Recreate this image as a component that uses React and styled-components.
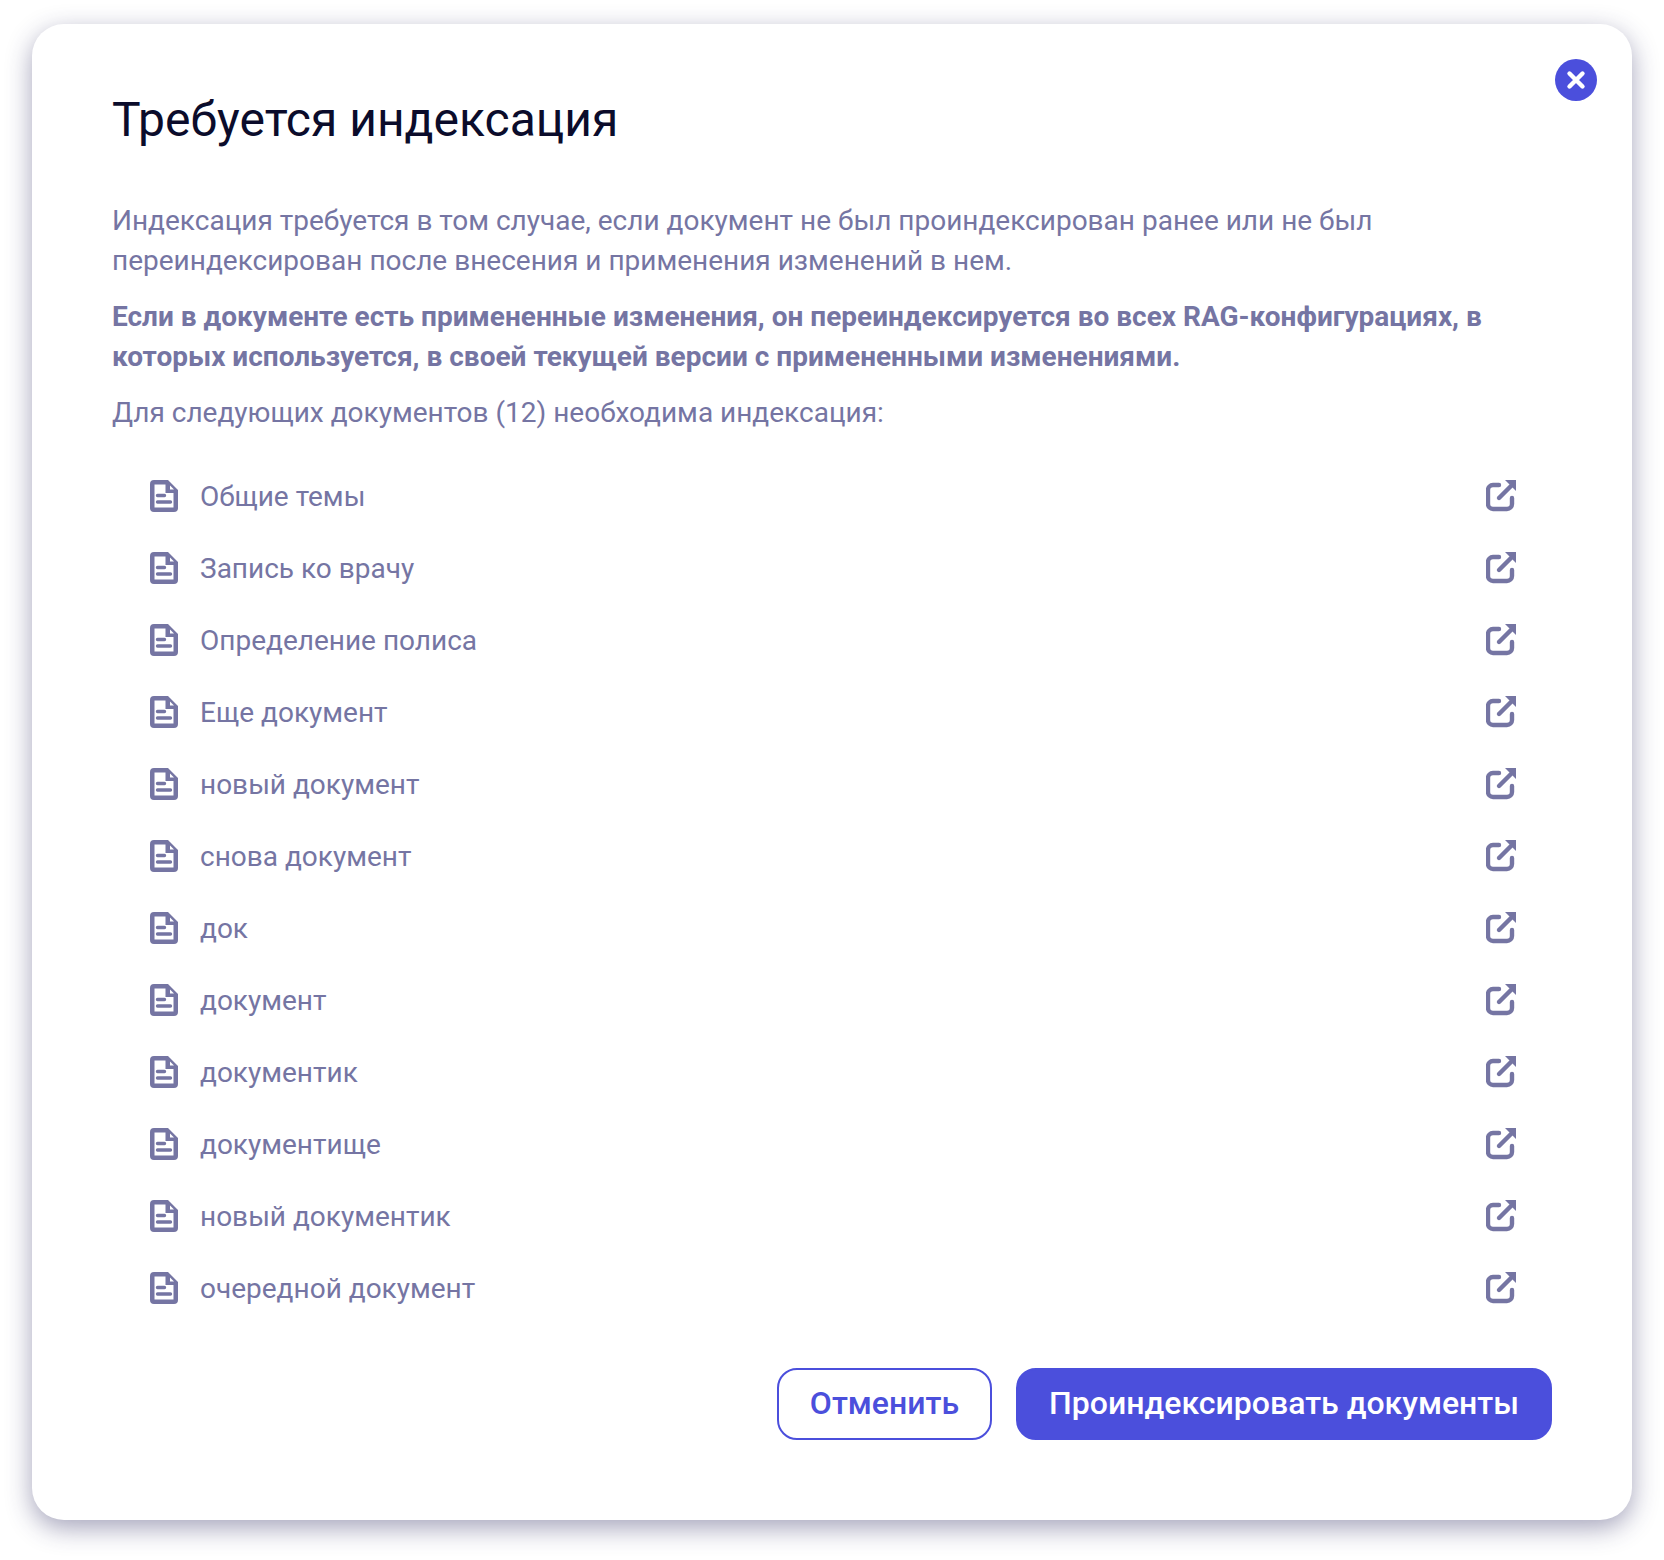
import React from 'react';
import styled, { createGlobalStyle } from 'styled-components';

const GlobalStyle = createGlobalStyle`
  html, body {
    margin: 0;
    padding: 0;
    background: #fff;
    font-family: Roboto, "Liberation Sans", sans-serif;
  }
`;

const Page = styled.div`
  width: 1664px;
  height: 1560px;
  box-sizing: border-box;
  padding: 24px 32px 40px;
`;

const Modal = styled.div`
  position: relative;
  height: 1496px;
  box-sizing: border-box;
  padding: 68px 80px 80px;
  background: #fff;
  border-radius: 32px;
  box-shadow: 0 8px 26px rgba(41, 38, 92, 0.42);
  display: flex;
  flex-direction: column;
`;

const CloseButton = styled.button`
  position: absolute;
  top: 35px;
  right: 35px;
  width: 42px;
  height: 42px;
  padding: 0;
  border: none;
  border-radius: 50%;
  background: #4b4fdc;
  display: flex;
  align-items: center;
  justify-content: center;
`;

const Title = styled.h1`
  margin: 0;
  font-size: 48px;
  line-height: 56px;
  font-weight: 400;
  color: #0b0c2b;
`;

const Text = styled.p`
  margin: ${(p) => p.$top}px 0 0;
  font-size: 28px;
  line-height: 40px;
  font-weight: ${(p) => (p.$bold ? 700 : 400)};
  color: #7575a3;
`;

const DocList = styled.ul`
  list-style: none;
  margin: 27px 0 0;
  padding: 0 36px 0 38px;
`;

const DocRow = styled.li`
  height: 72px;
  display: flex;
  align-items: center;
  font-size: 28px;
  color: #7575a3;
`;

const DocName = styled.span`
  flex: 1;
  margin-left: 22px;
`;

const Footer = styled.div`
  margin-top: auto;
  display: flex;
  justify-content: flex-end;
  gap: 24px;
`;

const Button = styled.button`
  height: 72px;
  box-sizing: border-box;
  padding: 0 31px 2px;
  border-radius: 20px;
  border: 2px solid #4b4fdc;
  background: ${(p) => (p.$primary ? '#4b4fdc' : '#fff')};
  color: ${(p) => (p.$primary ? '#fff' : '#4b4fdc')};
  font-family: inherit;
  font-size: 32px;
  font-weight: 500;
`;

const docs = [
  'Общие темы',
  'Запись ко врачу',
  'Определение полиса',
  'Еще документ',
  'новый документ',
  'снова документ',
  'док',
  'документ',
  'документик',
  'документище',
  'новый документик',
  'очередной документ',
];

const CloseIcon = () => (
  <svg width="20" height="20" viewBox="0 0 20 20" fill="none" stroke="#fff" strokeWidth="4.4" strokeLinecap="round">
    <path d="M3.500 3.500l13 13M16.500 3.500l-13 13" />
  </svg>
);

const DocIcon = () => (
  <svg width="28" height="32" viewBox="0 0 28 32" fill="none">
    <path
      fillRule="evenodd"
      fill="#7575a3"
      d="M4 0h14l10 10v18a4 4 0 0 1-4 4H4a4 4 0 0 1-4-4V4a4 4 0 0 1 4-4zM4.500 4.500V27.500H23.500V13H15.500V4.500zM20 5.500V9.500H24z"
    />
    <path d="M7.500 15.500h7M7.500 22h13" stroke="#7575a3" strokeWidth="3.4" strokeLinecap="round" />
  </svg>
);

const LinkIcon = () => (
  <svg width="30" height="32" viewBox="0 1 30 32" fill="none" stroke="#7575a3" strokeWidth="4.4" strokeLinecap="round">
    <path d="M13 6H7a5 5 0 0 0-5 5v14a5 5 0 0 0 5 5h14a5 5 0 0 0 5-5v-6" />
    <path d="M13 19L25 7" />
    <path d="M19 1h11v11z" fill="#7575a3" stroke="none" />
  </svg>
);

export default function App() {
  return (
    <Page>
      <GlobalStyle />
      <Modal>
        <CloseButton>
          <CloseIcon />
        </CloseButton>
        <Title>Требуется индексация</Title>
        <Text $top={53}>
          Индексация требуется в том случае, если документ не был проиндексирован ранее или не был
          <br />
          переиндексирован после внесения и применения изменений в нем.
        </Text>
        <Text $top={16} $bold>
          Если в документе есть примененные изменения, он переиндексируется во всех RAG-конфигурациях, в
          <br />
          которых используется, в своей текущей версии с примененными изменениями.
        </Text>
        <Text $top={16}>Для следующих документов (12) необходима индексация:</Text>
        <DocList>
          {docs.map((name) => (
            <DocRow key={name}>
              <DocIcon />
              <DocName>{name}</DocName>
              <LinkIcon />
            </DocRow>
          ))}
        </DocList>
        <Footer>
          <Button>Отменить</Button>
          <Button $primary>Проиндексировать документы</Button>
        </Footer>
      </Modal>
    </Page>
  );
}
